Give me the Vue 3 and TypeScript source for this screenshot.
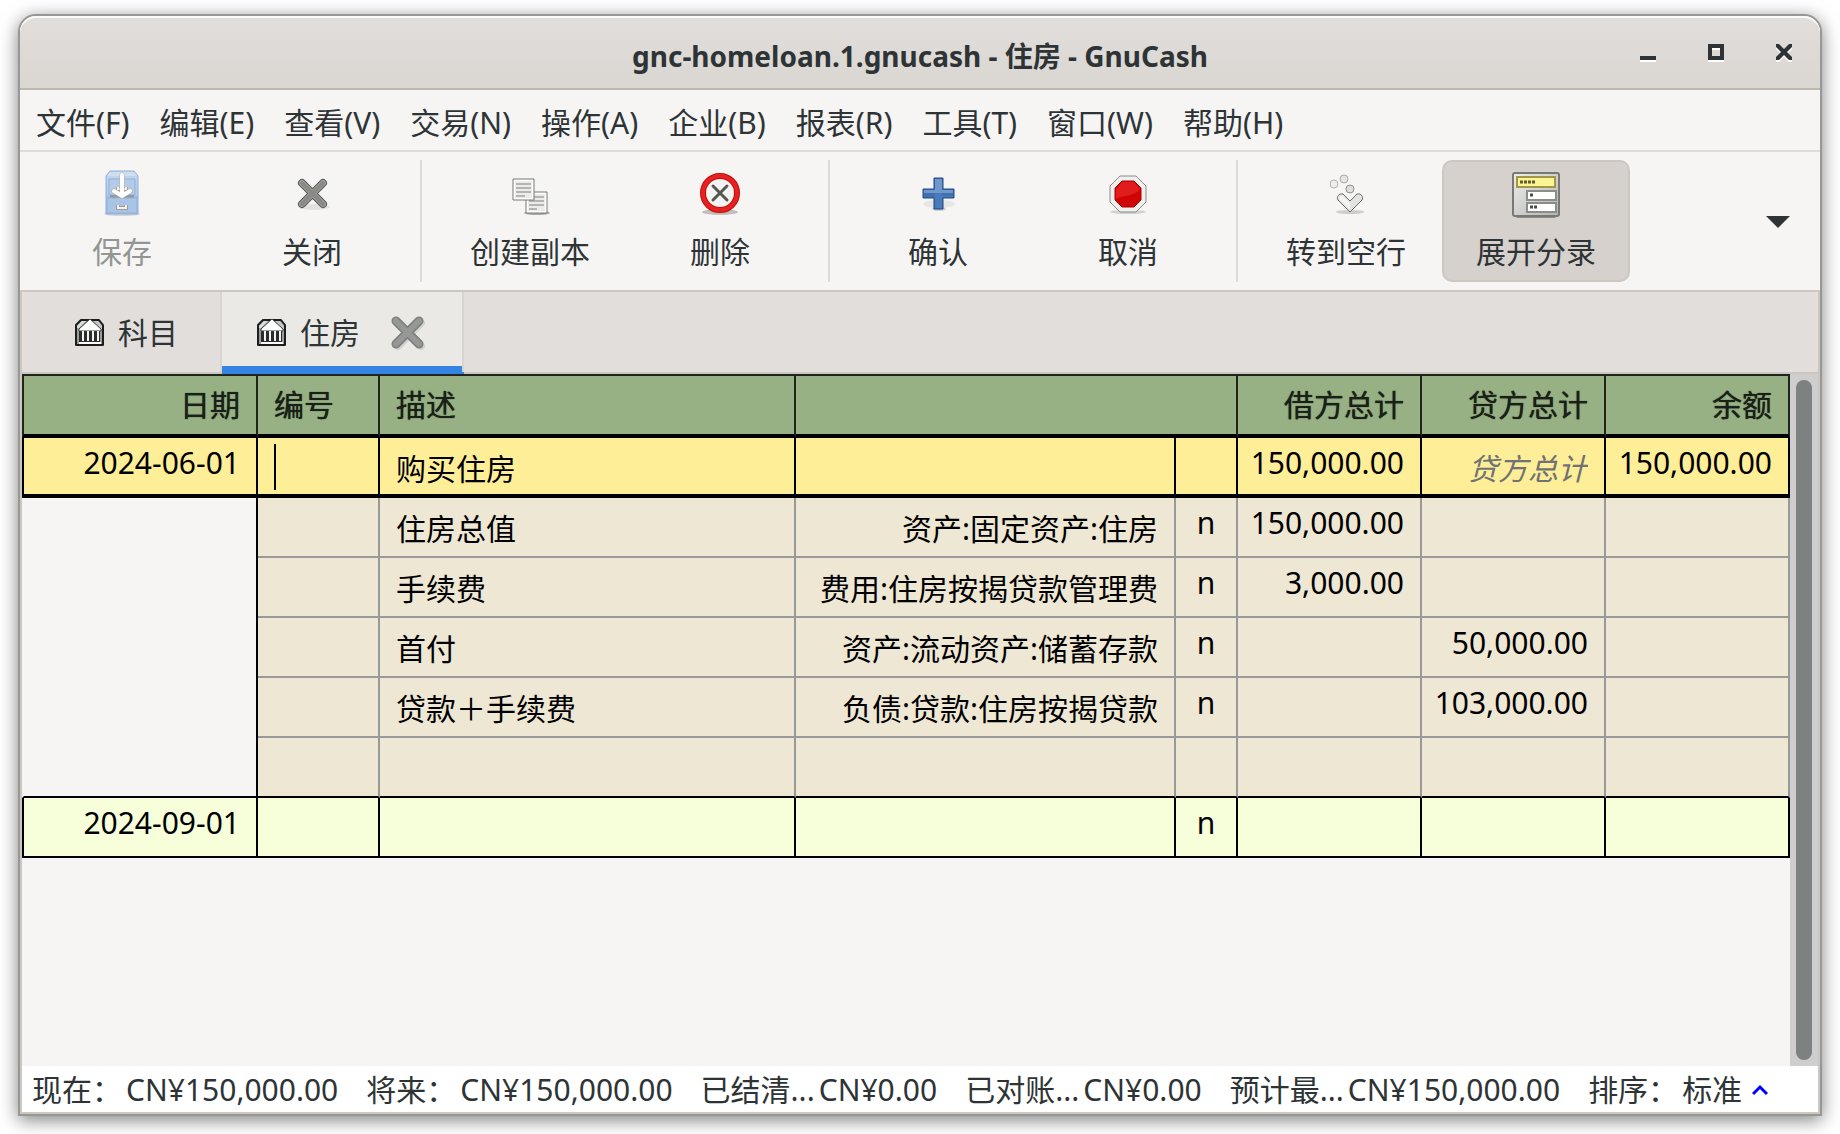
<script setup lang="ts">
import { ref } from 'vue'

interface SplitRow {
  description: string
  account: string
  reconcile: string
  debit: string
  credit: string
}

const menus: string[] = [
  '文件(F)', '编辑(E)', '查看(V)', '交易(N)', '操作(A)',
  '企业(B)', '报表(R)', '工具(T)', '窗口(W)', '帮助(H)',
]

const splits: SplitRow[] = [
  { description: '住房总值', account: '资产:固定资产:住房', reconcile: 'n', debit: '150,000.00', credit: '' },
  { description: '手续费', account: '费用:住房按揭贷款管理费', reconcile: 'n', debit: '3,000.00', credit: '' },
  { description: '首付', account: '资产:流动资产:储蓄存款', reconcile: 'n', debit: '', credit: '50,000.00' },
  { description: '贷款＋手续费', account: '负债:贷款:住房按揭贷款', reconcile: 'n', debit: '', credit: '103,000.00' },
  { description: '', account: '', reconcile: '', debit: '', credit: '' },
]

const summary = [
  { label: '现在：', value: 'CN¥150,000.00' },
  { label: '将来：', value: 'CN¥150,000.00' },
  { label: '已结清...', value: 'CN¥0.00' },
  { label: '已对账...', value: 'CN¥0.00' },
  { label: '预计最...', value: 'CN¥150,000.00' },
]

const expanded = ref(true)
const entryNumber = ref('')
const entryCredit = ref('')
</script>

<template>
  <div class="desktop">
    <main class="window">
      <header class="titlebar">
        <span class="side"></span>
        <h1>gnc-homeloan.1.gnucash - 住房 - GnuCash</h1>
        <div class="side controls">
          <button type="button" aria-label="最小化">
            <svg width="16" height="20" viewBox="0 0 16 20"><path d="M0 14h16v4H0z" fill="#fff" /><path d="M0 12h16v4H0z" fill="#2e3436" /></svg>
          </button>
          <button type="button" aria-label="最大化">
            <svg width="16" height="20" viewBox="0 0 16 20" fill="none" stroke-width="4"><path d="M2 4h12v12H2z" stroke="#fff" /><path d="M2 2h12v12H2z" stroke="#2e3436" /></svg>
          </button>
          <button type="button" aria-label="关闭窗口">
            <svg width="16" height="20" viewBox="0 0 16 20">
              <path d="M0 2h3l5 5 5-5h3v3l-5 5 5 5v3h-3l-5-5-5 5H0v-3l5-5-5-5z" fill="#fff" />
              <path d="M0 0h3l5 5 5-5h3v3l-5 5 5 5v3h-3l-5-5-5 5H0v-3l5-5-5-5z" fill="#2e3436" />
            </svg>
          </button>
        </div>
      </header>

      <nav class="menubar">
        <button v-for="m in menus" :key="m" type="button">{{ m }}</button>
      </nav>

      <div class="toolbar">
        <button type="button" class="tool" disabled>
          <svg width="48" height="48" viewBox="0 0 48 48">
            <defs>
              <linearGradient id="drawer" x1="0" y1="0" x2="0" y2="1"><stop offset="0" stop-color="#c3d6ec" /><stop offset="1" stop-color="#a5c0e3" /></linearGradient>
            </defs>
            <ellipse cx="24" cy="44" rx="18" ry="2" fill="#000" opacity=".12" />
            <path d="M12 1h24l4 5v38H8V6z" fill="url(#drawer)" stroke="#8fb0da" />
            <path d="M12 2h24l3 4H9z" fill="#d0dff0" />
            <path d="M11 9h26v16H11zM9 27h30" fill="#b3cae8" stroke="#92b1d9" />
            <path d="M12 25h24v3H12z" fill="#969a9c" />
            <path d="M9 28h30v15H9z" fill="#aac4e6" stroke="#92b1d9" />
            <path d="M20 17v2h8v-2M20 35v3h8v-3" fill="none" stroke="#a09c92" stroke-width="4" />
            <path d="M20 17v2h8v-2M20 35v3h8v-3" fill="none" stroke="#f3f1ea" stroke-width="2" />
            <path d="M24 5v20M16 21l8 5 8-5" fill="none" stroke="#b7b2a8" stroke-width="5" stroke-linecap="round" />
            <path d="M24 5v20M16 21l8 5 8-5" fill="none" stroke="#fff" stroke-width="4" stroke-linecap="round" />
          </svg>
          <span>保存</span>
        </button>
        <button type="button" class="tool">
          <svg width="48" height="48" viewBox="0 0 48 48" fill="none" stroke-linecap="round">
            <ellipse cx="26" cy="37" rx="16" ry="3" fill="#000" opacity=".08" />
            <path d="M14 13l21 21M35 13L14 34" stroke="#555753" stroke-width="8" />
            <path d="M14 13l21 21M35 13L14 34" stroke="#a3a5a2" stroke-width="6" />
            <path d="M14 13l21 21M35 13L14 34" stroke="#888a85" stroke-width="4" />
          </svg>
          <span>关闭</span>
        </button>
        <i class="separator"></i>
        <button type="button" class="tool">
          <svg width="48" height="48" viewBox="0 0 48 48">
            <ellipse cx="31" cy="43" rx="13" ry="2" fill="#000" opacity=".3" />
            <path d="M20 22h21v21H20z" fill="#fff" stroke="#777975" />
            <path d="M22 24h17v17H22z" fill="#ececec" />
            <path d="M23 27h15M23 31h15M23 35h15M23 39h8" stroke="#b4b4b2" stroke-width="2" />
            <path d="M7 9h21v21H7z" fill="#fff" stroke="#777975" />
            <path d="M9 11h17v17H9z" fill="#ececec" />
            <path d="M10 14h15M10 18h15M10 22h15M10 26h9" stroke="#b4b4b2" stroke-width="2" />
          </svg>
          <span>创建副本</span>
        </button>
        <button type="button" class="tool">
          <svg width="48" height="48" viewBox="0 0 48 48">
            <ellipse cx="24" cy="42" rx="18" ry="3" fill="#000" opacity=".22" />
            <circle cx="24" cy="23" r="17" fill="#f4f4f3" stroke="#c80a0a" stroke-width="6" />
            <circle cx="24" cy="23" r="17" fill="none" stroke="#e52222" stroke-width="4" />
            <path d="M17 16l14 14M31 16L17 30" stroke="#555753" stroke-width="3" stroke-linecap="round" />
          </svg>
          <span>删除</span>
        </button>
        <i class="separator"></i>
        <button type="button" class="tool">
          <svg width="48" height="48" viewBox="0 0 48 48">
            <ellipse cx="25" cy="34" rx="16" ry="4" fill="#000" opacity=".06" />
            <ellipse cx="25" cy="39" rx="7" ry="2" fill="#000" opacity=".15" />
            <path d="M20 8h9v11h11v9H29v11h-9V28H9v-9h11z" fill="#3f70b0" stroke="#204a87" stroke-linejoin="round" />
            <path d="M21 9h7v11h11v3H10v-3h11z" fill="#6f97c9" />
            <path d="M21 23h7v3h11v1H28v11h-7z" fill="#4a7ab8" />
          </svg>
          <span>确认</span>
        </button>
        <button type="button" class="tool">
          <svg width="48" height="48" viewBox="0 0 48 48">
            <ellipse cx="24" cy="42" rx="18" ry="2" fill="#000" opacity=".14" />
            <path d="M16 6h16l10 10v16L32 42H16L6 32V16z" fill="#efefee" stroke="#8b8d89" />
            <path d="M18 11h12l7 7v12l-7 7H18l-7-7V18z" fill="#cf0505" stroke="#b00000" />
            <path d="M18 12h12l6 7c-6 8-15 5-24 10V19z" fill="#e01c1c" />
          </svg>
          <span>取消</span>
        </button>
        <i class="separator"></i>
        <button type="button" class="tool">
          <svg width="48" height="48" viewBox="0 0 48 48">
            <ellipse cx="28" cy="42" rx="14" ry="2" fill="#000" opacity=".16" />
            <circle cx="12" cy="14" r="4" fill="#ececeb" stroke="#b4b5b3" />
            <circle cx="22" cy="9" r="4" fill="#e4e4e3" stroke="#a9aaa8" />
            <circle cx="28" cy="19" r="4" fill="#dededd" stroke="#8e908d" />
            <path d="M28 42L16 30c-2-3 1-7 5-6l7 7 7-7c4-1 7 3 5 6z" fill="#e3e3e2" stroke="#6a6c69" stroke-linejoin="round" />
            <path d="M28 40L17 29c0-3 3-4 4-3l7 7z" fill="#f3f3f2" />
          </svg>
          <span>转到空行</span>
        </button>
        <button type="button" class="tool" :class="{ active: expanded }" :aria-pressed="expanded" @click="expanded = !expanded">
          <svg width="48" height="48" viewBox="0 0 48 48">
            <defs>
              <linearGradient id="panel" x1="0" y1="0" x2="1" y2="1"><stop offset="0" stop-color="#eeeeec" /><stop offset="1" stop-color="#b4b4b2" /></linearGradient>
            </defs>
            <path d="M1 44h46l-4 4H5z" fill="#6f716d" opacity=".7" />
            <rect x="1" y="3" width="46" height="43" rx="2" fill="url(#panel)" stroke="#777976" stroke-width="2" />
            <path d="M5 7h38v10H5z" fill="#fdf594" stroke="#a09848" stroke-width="2" />
            <path d="M15 21h29v9H15zM15 33h29v9H15z" fill="#fff" stroke="#8b8d8a" stroke-width="2" />
            <path d="M8 12h16" stroke="#5f5b2c" stroke-width="3" stroke-dasharray="3 1" />
            <path d="M18 25h3M18 37h8" stroke="#4a4c4a" stroke-width="3" stroke-dasharray="3 1" />
          </svg>
          <span>展开分录</span>
        </button>
        <button type="button" class="overflow" aria-label="更多">
          <svg width="24" height="12" viewBox="0 0 24 12"><path d="M0 0h24L12 12z" fill="#2e3436" /></svg>
        </button>
      </div>

      <div class="notebook">
        <div class="tabs">
          <div v-for="(tab, i) in ['科目', '住房']" :key="tab" class="tab" :class="{ current: i === 1 }">
            <button type="button" class="tab-name">
              <svg width="30" height="30" viewBox="0 0 30 30">
                <path d="M6 2h18l4 5v20H1V7z" fill="#9b9d9a" stroke="#1c1e1c" stroke-width="2" stroke-linejoin="round" />
                <path d="M7 3h4L4 10H2V8z" fill="#dcdddb" />
                <path d="M18 3h5l4 5v3h-2z" fill="#c4c6c3" />
                <path d="M4 11h21v14H4z" fill="#2b2d2b" />
                <path d="M15 1l11 10v2H4v-2z" fill="#fff" stroke="#3c3e3c" stroke-linejoin="round" />
                <path d="M8 13v10M13 13v10M18 13v10M23 13v10" stroke="#f4f4f3" stroke-width="2" />
                <path d="M4 25h22" stroke="#fff" stroke-width="2" />
                <path d="M2 27h26" stroke="#1c1e1c" stroke-width="2" />
              </svg>
              <span>{{ tab }}</span>
            </button>
            <button v-if="i === 1" type="button" class="tab-close" aria-label="关闭标签页">
              <svg width="36" height="36" viewBox="0 0 36 36" fill="none" stroke-linecap="round">
                <path d="M8 8l23 23M31 8L8 31" stroke="#000" stroke-opacity=".1" stroke-width="8" />
                <path d="M6 6l23 23M29 6L6 29" stroke="#7d7f7d" stroke-width="9" />
                <path d="M6 6l23 23M29 6L6 29" stroke="#969896" stroke-width="6" />
              </svg>
            </button>
          </div>
        </div>

        <div class="page">
          <div class="sheet">
            <table>
              <colgroup>
                <col class="c-date"><col class="c-num"><col><col class="c-account">
                <col class="c-flag"><col class="c-money"><col class="c-money"><col class="c-money">
              </colgroup>
              <thead>
                <tr>
                  <th class="right">日期</th>
                  <th>编号</th>
                  <th>描述</th>
                  <th colspan="2"></th>
                  <th class="right">借方总计</th>
                  <th class="right">贷方总计</th>
                  <th class="right">余额</th>
                </tr>
              </thead>
              <tbody>
                <tr class="entry">
                  <td class="amount">2024-06-01</td>
                  <td><input v-model="entryNumber" class="number-input" type="text" aria-label="编号"></td>
                  <td>购买住房</td>
                  <td></td>
                  <td></td>
                  <td class="amount">150,000.00</td>
                  <td><input v-model="entryCredit" class="credit-input" type="text" aria-label="贷方总计" placeholder="贷方总计"></td>
                  <td class="amount">150,000.00</td>
                </tr>
                <tr v-for="(s, i) in splits" :key="i" class="split">
                  <td></td>
                  <td></td>
                  <td>{{ s.description }}</td>
                  <td class="right">{{ s.account }}</td>
                  <td class="amount flag">{{ s.reconcile }}</td>
                  <td class="amount">{{ s.debit }}</td>
                  <td class="amount">{{ s.credit }}</td>
                  <td></td>
                </tr>
                <tr class="blank">
                  <td class="amount">2024-09-01</td>
                  <td></td>
                  <td></td>
                  <td></td>
                  <td class="amount flag">n</td>
                  <td></td>
                  <td></td>
                  <td></td>
                </tr>
              </tbody>
            </table>
          </div>
          <div class="scrollbar"><div class="thumb"></div></div>
        </div>

        <footer class="summary">
          <div v-for="s in summary" :key="s.label" class="total">
            <span>{{ s.label }}</span><span>{{ s.value }}</span>
          </div>
          <div class="total">
            <span>排序：</span><span>标准</span>
          </div>
          <svg class="order" width="16" height="12" viewBox="0 0 16 12"><path d="M1 10l7-7 7 7" fill="none" stroke="#00f" stroke-width="3" /></svg>
        </footer>
      </div>
    </main>
  </div>
</template>

<style>
body {
  margin: 0;
  background: #fff;
}
</style>

<style scoped>
.desktop {
  box-sizing: border-box;
  min-height: 100vh;
  padding: 14px 18px 18px;
  display: flex;
  font-family: "Noto Sans", "Noto Sans CJK SC", sans-serif;
  font-size: 30px;
  color: #2e3436;
}

.window {
  flex: 1;
  min-width: 0;
  display: flex;
  flex-direction: column;
  border: 2px solid #999794;
  border-radius: 18px 18px 0 0;
  background: #f6f5f4;
  box-shadow: 0 4px 18px rgba(0, 0, 0, 0.5);
}

button {
  margin: 0;
  padding: 0;
  border: 0;
  background: none;
  font: inherit;
  color: inherit;
}

svg {
  display: block;
}

.titlebar {
  display: flex;
  height: 72px;
  border-bottom: 2px solid #bfb8b1;
  border-radius: 16px 16px 0 0;
  background: linear-gradient(#e1dedb, #dad6d2);
  box-shadow: inset 0 2px #fbfafa;
}

.titlebar h1 {
  margin: 0;
  padding-top: 8px;
  font-size: 28px;
  font-weight: 700;
  line-height: 64px;
  white-space: nowrap;
}

.side {
  box-sizing: border-box;
  flex: 1 1 180px;
}

.controls {
  display: flex;
  justify-content: flex-end;
  align-items: flex-start;
  gap: 52px;
  padding: 28px 28px 0 0;
}

.menubar {
  display: flex;
  gap: 30px;
  height: 54px;
  padding: 6px 16px 0;
  line-height: 54px;
  border-bottom: 2px solid #dedcda;
}

.toolbar {
  display: flex;
  padding: 8px 7px;
  border-bottom: 2px solid #cdc7c2;
}

.tool {
  box-sizing: border-box;
  width: 188px;
  height: 122px;
  margin: 0 1px;
  padding: 8px 0 4px;
  display: flex;
  flex-direction: column;
  align-items: center;
  gap: 10px;
  border: 2px solid transparent;
  border-radius: 10px;
  line-height: 48px;
}

.tool:disabled {
  color: #929595;
}

.tool.active {
  border-color: #cdc7c2;
  background: #d6d1cd;
}

.separator {
  width: 2px;
  margin: 0 13px;
  background: #dddbd9;
}

.overflow {
  margin-left: auto;
  padding: 2px 23px 0;
}

.notebook {
  flex: 1;
  display: flex;
  flex-direction: column;
  border: 2px solid #cdc7c2;
  border-top: 0;
}

.tabs {
  display: flex;
  height: 80px;
  border-bottom: 2px solid #cdc7c2;
  background: #e1dedb;
}

.tab {
  display: flex;
  gap: 30px;
  height: 78px;
  padding: 2px 42px 0 53px;
  border-right: 2px solid #d8d4d0;
}

.tab.current {
  padding: 2px 36px 0 35px;
  background: #ebe9e6;
  box-shadow: inset 0 -6px #3584e4, 0 2px #3584e4;
}

.tab-name {
  display: flex;
  align-items: center;
  gap: 13px;
  line-height: 78px;
}

.tab-close {
  display: flex;
  align-items: center;
}

.page {
  flex: 1;
  display: flex;
}

.sheet {
  flex: 1;
  min-width: 0;
}

.scrollbar {
  box-sizing: border-box;
  width: 28px;
  padding: 6px;
  display: flex;
  background: #cecece;
}

.thumb {
  flex: 1;
  border-radius: 8px;
  background: #7e8182;
}

table {
  width: 100%;
  table-layout: fixed;
  border-collapse: separate;
  border-spacing: 0;
  color: #000;
}

.c-date { width: 236px; }
.c-num { width: 122px; }
.c-account { width: 380px; }
.c-flag { width: 62px; }
.c-money { width: 184px; }

th,
td {
  box-sizing: border-box;
  height: 60px;
  padding: 6px 16px 0;
  border: 0 solid #000;
  border-width: 0 2px 2px 0;
  font-weight: 400;
  line-height: 50px;
  text-align: left;
  vertical-align: top;
  white-space: nowrap;
}

th {
  height: 64px;
  padding-top: 4px;
  border-width: 2px 2px 4px 0;
  border-color: #1f241c #1f241c #000;
  background: #97b184;
  color: #1a1f17;
  text-shadow: 0 0 1px #1a1f17;
}

th:first-child,
td:first-child {
  border-left-width: 2px;
}

.right {
  text-align: right;
}

.amount {
  padding: 0 16px 0 8px;
  text-align: right;
}

.flag {
  padding: 0;
  text-align: center;
}

.entry td {
  border-bottom-width: 4px;
  background: #ffee98;
}

.split td {
  border-color: #999;
  background: #eee7d4;
}

.split td:first-child {
  border-color: transparent #000 transparent transparent;
  border-bottom-width: 0;
  background: none;
}

.split:nth-last-child(2) td {
  border-bottom: 2px solid #000;
}

.blank td {
  background: #f6ffda;
}

td input {
  box-sizing: border-box;
  display: block;
  width: 100%;
  height: 50px;
  margin: 0;
  padding: 0;
  border: 0;
  outline: 0;
  background: none;
  font: inherit;
}

td .number-input {
  height: 46px;
  border-left: 2px solid #000;
}

.credit-input {
  text-align: right;
}

.credit-input::placeholder {
  color: #707274;
  font-style: italic;
  opacity: 1;
}

.summary {
  display: flex;
  gap: 28px;
  height: 44px;
  padding: 2px 10px 0;
  line-height: 44px;
  white-space: nowrap;
  background: #fff;
}

.total {
  display: flex;
  gap: 4px;
}

.order {
  align-self: center;
  margin-left: -18px;
}
</style>
